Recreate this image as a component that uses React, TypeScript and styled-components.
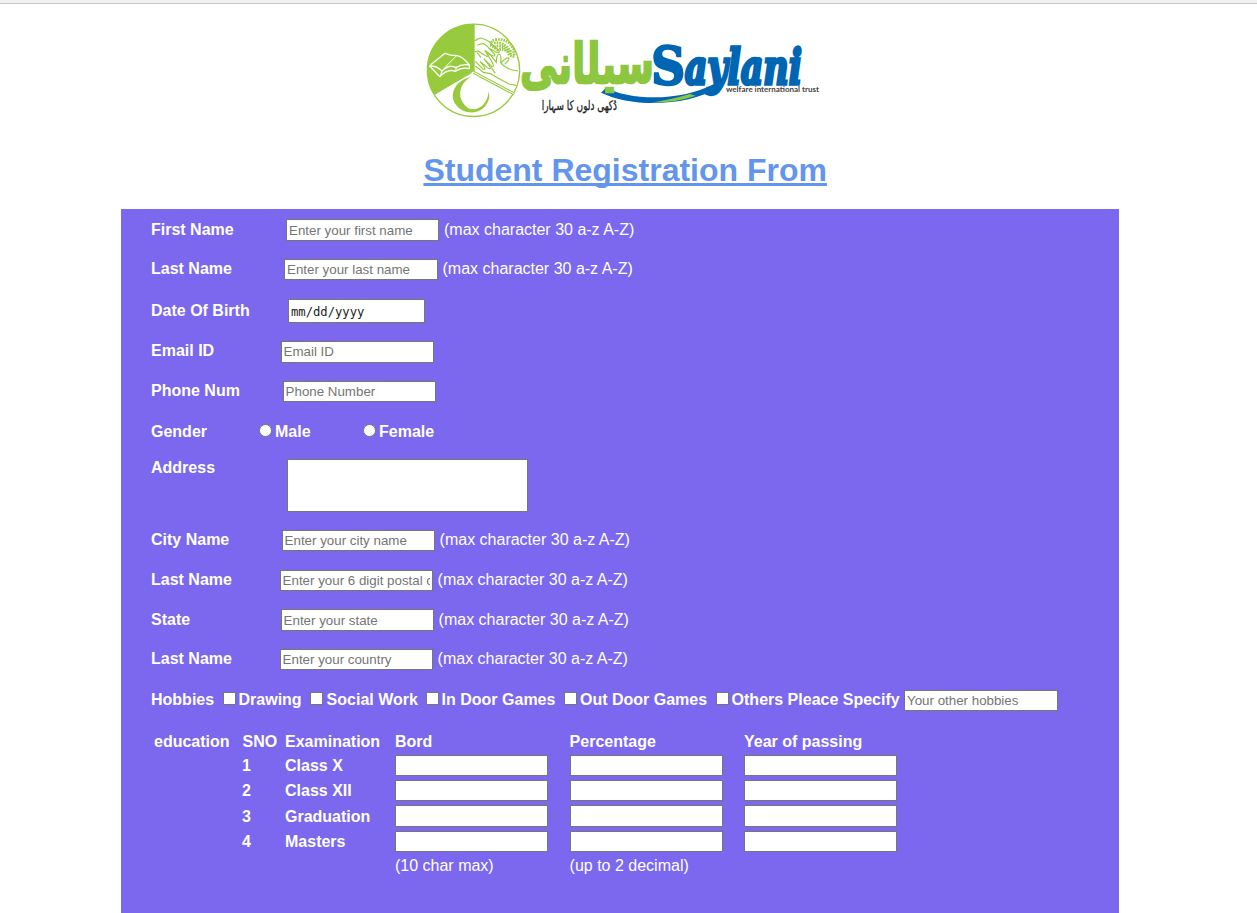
import React from "react";
import styled, { createGlobalStyle } from "styled-components";

const GlobalStyle = createGlobalStyle`
  body { margin: 0; background: #fff; font-family: "Liberation Sans", Arial, sans-serif; font-size: 16px; }
`;

const Page = styled.div`
  display: flex;
  flex-direction: column;
  height: 913px;
  overflow: hidden;
`;
const TopEdge = styled.div`
  height: 3px;
  flex: none;
  background: #f0f0f0;
  border-bottom: 1px solid #c8c8c8;
`;
const Header = styled.header`
  flex: none;
  height: 205px;
  padding-left: 420px;
`;
const LogoSvg = styled.svg`
  display: block;
  margin-top: 11px;
  overflow: visible;
`;
const Title = styled.h1`
  margin: 27px 0 0 3.4px;
  font-size: 32px;
  line-height: 37px;
  color: #6495ed;
  text-decoration: underline;
  text-decoration-skip-ink: none;
  text-decoration-thickness: 3px;
  text-underline-offset: 2px;
  white-space: nowrap;
`;
const Form = styled.form`
  flex: 1;
  box-sizing: border-box;
  width: 998px;
  margin-left: 121px;
  padding: 10px 0 0 30px;
  background: #7b68ee;
  color: #fff;
`;
const Row = styled.div<{ $height: number }>`
  display: flex;
  align-items: flex-start;
  height: ${(p) => p.$height}px;
  line-height: 18px;
  white-space: nowrap;
`;
const Label = styled.label<{ $width?: number; $drop?: number }>`
  flex: none;
  font-weight: bold;
  margin-top: ${(p) => p.$drop ?? 1}px;
  ${(p) => p.$width !== undefined && `width: ${p.$width}px;`}
`;
const Hint = styled.span<{ $drop?: number }>`
  margin: ${(p) => p.$drop ?? 1}px 0 0 5px;
`;
const Field = styled.input<{ $height?: number; $width?: number; $lift?: boolean }>`
  flex: none;
  display: block;
  box-sizing: border-box;
  width: ${(p) => p.$width ?? 153}px;
  height: ${(p) => p.$height ?? 21}px;
  margin: 0;
  padding: 1px 2px ${(p) => (p.$lift ? 3 : 1)}px;
  border: 1px solid #767676;
  border-radius: 0;
  background: #fff;
  color: #000;
  font: 13.333px "Liberation Sans", Arial, sans-serif;
  &::placeholder { color: #757575; opacity: 1; }
`;
const DateField = styled(Field)`
  width: 137px;
  padding-top: 3px;
  font: 12.2px "DejaVu Sans Mono", monospace;
  &::placeholder { color: #222; }
`;
const Area = styled.textarea`
  box-sizing: border-box;
  width: 241px;
  height: 53px;
  margin: 0;
  border: 1px solid #767676;
  resize: none;
`;
const Tick = styled.input<{ $gap?: number }>`
  appearance: none;
  flex: none;
  box-sizing: border-box;
  width: 13px;
  height: 13px;
  margin: 2px ${(p) => p.$gap ?? 3}px 0 0;
  border: 1px solid #767676;
  background: #fff;
  &[type="radio"] { border-radius: 50%; margin-top: 0; }
`;
const Choice = styled.div<{ $width: number }>`
  flex: none;
  display: flex;
  align-items: flex-start;
  width: ${(p) => p.$width}px;
`;
const Education = styled.div`
  display: grid;
  grid-template-columns: 88px 43px 110px 174.6px 174.4px 153px;
  grid-template-rows: 22px 25px 25px 26px 24px 24px;
  padding-left: 3px;
  line-height: 18px;
  white-space: nowrap;
`;
const Head = styled.div<{ $shift?: number }>`
  font-weight: bold;
  margin-left: ${(p) => p.$shift ?? 0}px;
`;
const Cell = styled.div<{ $drop: number }>`
  font-weight: bold;
  margin-top: ${(p) => p.$drop}px;
`;
const Note = styled.div`
  margin-top: 2px;
`;

const limit = "(max character 30 a-z A-Z)";

type Entry = { label: string; text: string; offset: number; height: number; box?: number; width?: number; hint?: boolean; drop?: number; lift?: boolean };
const nameRows: Entry[] = [
  { label: "First Name", text: "Enter your first name", offset: 135, height: 40, box: 22, hint: true, drop: 2 },
  { label: "Last Name", text: "Enter your last name", offset: 133, height: 40, width: 153.5, hint: true },
];
const contactRows: Entry[] = [
  { label: "Email ID", text: "Email ID", offset: 129.6, height: 40, box: 22, lift: true },
  { label: "Phone Num", text: "Phone Number", offset: 131.6, height: 43 },
];
const placeRows: Entry[] = [
  { label: "City Name", text: "Enter your city name", offset: 130.6, height: 40, hint: true },
  { label: "Last Name", text: "Enter your 6 digit postal code", offset: 128.6, height: 39, hint: true },
  { label: "State", text: "Enter your state", offset: 129.6, height: 40, box: 22, hint: true, drop: 2 },
  { label: "Last Name", text: "Enter your country", offset: 128.6, height: 41, hint: true },
];
const hobbies: [string, number, number][] = [
  ["Drawing", 87, 2.5],
  ["Social Work", 116, 3.6],
  ["In Door Games", 138, 2.6],
  ["Out Door Games", 152, 3],
  ["Others Pleace Specify", 188, 2.6],
];
const exams: [string, number, number][] = [
  ["Class X", 2, 21],
  ["Class XII", 2, 21],
  ["Graduation", 3, 22],
  ["Masters", 2, 21],
];

const Rows = ({ items }: { items: Entry[] }) => (
  <>
    {items.map((r) => (
      <Row key={r.text} $height={r.height}>
        <Label $width={r.offset} $drop={r.drop}>{r.label}</Label>
        <Field placeholder={r.text} $height={r.box} $width={r.width} $lift={r.lift} />
        {r.hint && <Hint $drop={r.drop}>{limit}</Hint>}
      </Row>
    ))}
  </>
);

const Logo = () => (
  <LogoSvg width="410" height="110" viewBox="0 0 1230 330">
    <g stroke="#97ca3d" fill="none" strokeWidth="4">
      <circle cx="160.500" cy="166" r="138.500" fill="#fff" />
      <path d="M161 166V29A137 137 0 0 0 44 237Z" fill="#97ca3d" />
      <path d="M161 29V170" strokeWidth="5" />
      <path d="M161 172L283 237" stroke="#97ca3d" strokeWidth="9" />
      <path d="M161 172L283 237" stroke="#fff" strokeWidth="3" />
      <path d="M155 173L44 237" strokeWidth="3" />
      <g strokeWidth="3.500">
        <path d="M164 78C180 64 190 70 205 78L236 105Q242 116 228 111L206 99L224 118Q226 127 213 120L194 106L205 121Q203 128 192 119L174 108L164 111" />
        <path d="M166 139L189 162Q197 166 193 156L180 139L205 160Q215 164 208 152L192 132L215 154Q223 157 218 144L202 118Q202 112 211 120L229 142Q229 120 237 117Q245 119 242 143Q253 158 278 165L294 168" />
        <path d="M166 153L190 172L211 176L228 186L267 207L289 211M214 157L226 175" />
        <path d="M242 143L256 132Q269 124 266 135L254 148M171 112L183 128M172 90L190 85L207 98" />
      </g>
      <path d="M214 92Q212 73 230 74Q264 70 280 101L283 124Q270 127 263 111Q250 99 233 105Z" strokeWidth="8" strokeDasharray="5 3" />
      <path d="M222 84Q250 78 273 110M222 95Q252 86 274 119" strokeWidth="8" strokeDasharray="5 3" />
    </g>
    <g fill="none" stroke="#fff" strokeWidth="4" strokeLinejoin="round">
      <path d="M32 149L75 115Q91 122 110 122Q128 124 148 150Q125 146 108 158Q88 146 66 168Q50 152 29 153L59 185Q84 160 107 169Q125 155 148 161V151" />
      <path d="M110 122L74 158M66 168L60 184M108 158V168" strokeWidth="3" />
    </g>
    <path d="M153 186C104 196 85 241 109 271C137 306 198 299 208 246L206 227C205 268 168 297 139 275C108 246 119 204 153 186Z" fill="#97ca3d" />

    <path d="M543 233L558 218C625 254 776 263 882 207Q907 205 903 215C795 277 635 277 543 233Z" fill="#0066b3" />
    <path d="M695 263Q771 250 809 237L827 242Q767 263 695 263Z" fill="#8dc63f" />
    <text x="702" y="205" textAnchor="start" direction="rtl" textLength="402" lengthAdjust="spacingAndGlyphs" fill="#8dc63f" stroke="#8dc63f" strokeWidth="7" fontFamily="'DejaVu Sans', sans-serif" fontWeight="700" fontSize="165">{"سيل\u200dانى"}</text>
    <text x="694" y="208" textLength="102" lengthAdjust="spacingAndGlyphs" fill="#0066b3" stroke="#0066b3" strokeWidth="7" fontFamily="'DejaVu Serif', serif" fontWeight="700" fontSize="157">S</text>
    <text x="794" y="207" textLength="352" lengthAdjust="spacingAndGlyphs" fill="#0066b3" stroke="#0066b3" strokeWidth="10" fontFamily="'DejaVu Serif', serif" fontWeight="700" fontStyle="italic" fontSize="145">aylani</text>
    <text x="918" y="232" textLength="279" lengthAdjust="spacingAndGlyphs" fill="#444" fontFamily="Lato, sans-serif" fontWeight="700" fontSize="25">welfare international trust</text>
    <text x="591" y="286" direction="rtl" textLength="226" lengthAdjust="spacingAndGlyphs" fill="#222" stroke="#222" strokeWidth="1" fontFamily="'DejaVu Sans', sans-serif" fontSize="40">دُکھی دلوں کا سہارا</text>
  </LogoSvg>
);

export default function App() {
  return (
    <Page>
      <GlobalStyle />
      <TopEdge />
      <Header>
        <Logo />
        <Title>Student Registration From</Title>
      </Header>
      <Form>
        <Rows items={nameRows} />
        <Row $height={42}>
          <Label $width={137} $drop={3}>Date Of Birth</Label>
          <DateField placeholder="mm/dd/yyyy" $height={24} />
        </Row>
        <Rows items={contactRows} />
        <Row $height={35}>
          <Label $width={108} $drop={-1}>Gender</Label>
          <Choice $width={104}>
            <Tick type="radio" name="gender" />
            <Label $drop={-1}>Male</Label>
          </Choice>
          <Choice $width={104}>
            <Tick type="radio" name="gender" />
            <Label $drop={-1}>Female</Label>
          </Choice>
        </Row>
        <Row $height={71}>
          <Label $width={136} $drop={0}>Address</Label>
          <Area />
        </Row>
        <Rows items={placeRows} />
        <Row $height={43}>
          <Label $width={72}>Hobbies</Label>
          {hobbies.map(([name, width, gap]) => (
            <Choice key={name} $width={width}>
              <Tick type="checkbox" $gap={gap} />
              <Label>{name}</Label>
            </Choice>
          ))}
          <Field placeholder="Your other hobbies" $width={153.6} />
        </Row>
        <Education>
          <Head>education</Head>
          <Head $shift={0.6}>SNO</Head>
          <Head>Examination</Head>
          <Head>Bord</Head>
          <Head>Percentage</Head>
          <Head>Year of passing</Head>
          {exams.map(([exam, drop, box], i) => (
            <React.Fragment key={exam}>
              <span />
              <Cell $drop={drop}>{i + 1}</Cell>
              <Cell $drop={drop}>{exam}</Cell>
              <Field $height={box} />
              <Field $height={box} />
              <Field $height={box} />
            </React.Fragment>
          ))}
          <span />
          <span />
          <span />
          <Note>(10 char max)</Note>
          <Note>(up to 2 decimal)</Note>
        </Education>
      </Form>
    </Page>
  );
}
